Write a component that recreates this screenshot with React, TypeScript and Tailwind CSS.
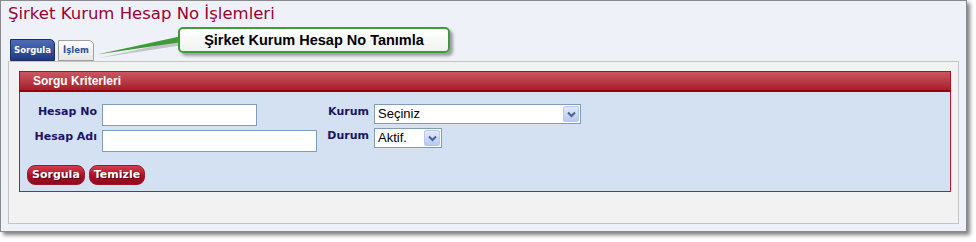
import React from 'react';

const verdana = { fontFamily: '"DejaVu Sans", Verdana, sans-serif' };
const arial = { fontFamily: '"Liberation Sans", Arial, sans-serif' };

const SelectBox = ({ value, width }: { value: string; width: string }) => (
  <div className={`${width} h-[20px] bg-white border border-[#7f9db9] flex items-center justify-between pl-[3px] pr-[1px]`}>
    <span className="text-[13px] leading-[16px] text-black" style={arial}>{value}</span>
    <span className="w-[16px] h-[16px] rounded-[2px] border border-[#b7c9f1] bg-gradient-to-b from-[#e1e9fd] to-[#b4c8f7] flex items-center justify-center">
      <svg width="9" height="7" viewBox="0 0 9 7">
        <path d="M1 1.5 L4.5 5 L8 1.5" stroke="#4d6185" strokeWidth="2" fill="none" />
      </svg>
    </span>
  </div>
);

const RedButton = ({ label }: { label: string }) => (
  <button
    className="h-[20px] px-[4px] rounded-[8px] bg-gradient-to-b from-[#d63a4c] via-[#b0102a] to-[#8e0a1e] border border-[#9a1a2a] text-white font-bold text-[11px] leading-[18px] [text-shadow:1px_1px_0_#5a0010]"
    style={verdana}
  >
    {label}
  </button>
);

const Label = ({ text }: { text: string }) => (
  <div className="text-right pr-[5px] font-bold text-[11px] leading-[14px] text-[#1d1466] pt-[1px]" style={verdana}>
    {text}
  </div>
);

export default function App() {
  return (
    <div className="w-[976px] h-[242px] bg-white relative">
      <div className="w-[967px] h-[232px] border border-[#8a8a8a] bg-[#eef2f8] shadow-[3px_3px_4px_rgba(0,0,0,0.5)] px-[7px]">
        <div className="h-[38px] pt-[3px]">
          <h1 className="text-[16.5px] leading-[20px] text-[#990033]" style={verdana}>
            Şirket Kurum Hesap No İşlemleri
          </h1>
        </div>

        {/* tabs */}
        <div className="h-[22px] flex items-end gap-[3px] pl-[2px]">
          <div
            className="w-[45px] h-[22px] rounded-tr-[5px] border border-[#1b2f66] bg-gradient-to-b from-[#4f6db5] to-[#1f3a82] text-white font-bold text-[8.5px] flex items-center justify-center"
            style={verdana}
          >
            Sorgula
          </div>
          <div
            className="w-[36px] h-[21px] rounded-tr-[5px] border border-[#a0a0a0] bg-gradient-to-b from-[#ffffff] to-[#e6e6e6] text-[#2f4f9f] font-bold text-[8.5px] flex items-center justify-center"
            style={verdana}
          >
            İşlem
          </div>
        </div>

        {/* panel */}
        <div className="h-[163px] border border-[#c4c4c4] bg-[#f2f2f2] pt-[9px] pl-[10px] pr-[7px]">
          <div>
            <div className="h-[21px] border border-[#b01020] border-b-2 border-b-[#950000] bg-gradient-to-b from-[#cb5562] to-[#a81a2a] pl-[13px] flex items-center">
              <span className="text-white font-bold text-[12px] leading-[14px]" style={arial}>Sorgu Kriterleri</span>
            </div>
            <div className="bg-[#d4e1f2] border border-t-0 border-[#c41230] pt-[12px] pb-[6px]">
              <div className="grid grid-cols-[82px_224px_48px_auto] gap-y-[2px]">
                <Label text="Hesap No" />
                <div className="h-[22px]">
                  <div className="w-[155px] h-[22px] bg-white border border-[#7f9db9]" />
                </div>
                <Label text="Kurum" />
                <SelectBox value="Seçiniz" width="w-[207px]" />

                <div className="pt-[1px]">
                  <Label text="Hesap Adı" />
                </div>
                <div className="h-[24px] pt-[2px]">
                  <div className="w-[215px] h-[22px] bg-white border border-[#7f9db9]" />
                </div>
                <Label text="Durum" />
                <SelectBox value="Aktif." width="w-[68px]" />
              </div>
              <div className="flex gap-[4px] pl-[7px] mt-[13px]">
                <RedButton label="Sorgula" />
                <RedButton label="Temizle" />
              </div>
            </div>
          </div>
        </div>
      </div>

      {/* callout */}
      <svg className="absolute left-[94px] top-[32px]" width="92" height="28" viewBox="0 0 92 28">
        <path d="M4 24 L88 6 L88 11 Z" fill="#8a8a8a" opacity="0.45" transform="translate(1 2)" />
        <path d="M3 22.5 L88 4 L88 10 Z" fill="#3f9a3a" />
      </svg>
      <div className="absolute left-[178px] top-[27px] w-[272px] h-[26px] rounded-[5px] border-2 border-[#3f9a3a] bg-gradient-to-b from-[#ffffff] to-[#eef3ee] shadow-[3px_3px_3px_rgba(0,0,0,0.35)] flex items-center justify-center">
        <span className="font-bold text-[14.5px] leading-[18px] text-black" style={arial}>Şirket Kurum Hesap No Tanımla</span>
      </div>
    </div>
  );
}
